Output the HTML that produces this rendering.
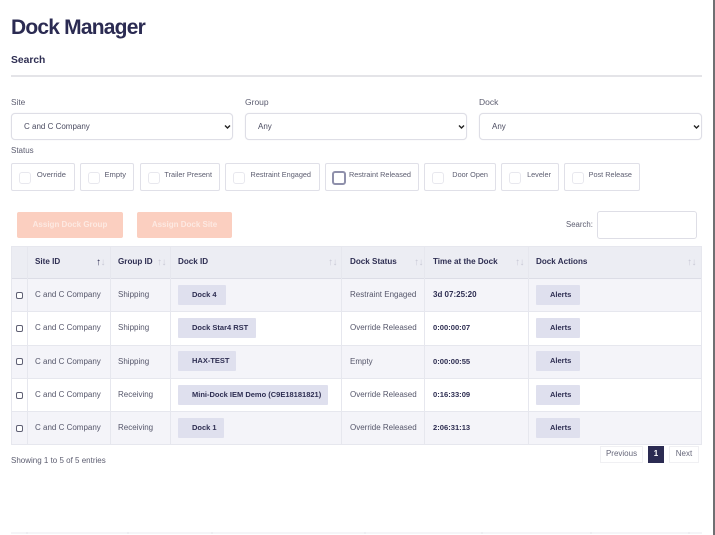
<!DOCTYPE html>
<html><head><meta charset="utf-8">
<style>
html,body{margin:0;padding:0;background:#fff}
#p{position:relative;width:715px;height:535px;overflow:hidden;background:#fff;font-family:"Liberation Sans",sans-serif;color:#55566a;font-size:8px;filter:blur(.35px)}
#p div{position:absolute;box-sizing:border-box;white-space:nowrap}
.lab{font-size:8.3px;color:#5c5d70;line-height:10px}
.sel{top:113px;height:27px;border:1px solid #dedee6;border-radius:4px;background:#fff;padding-left:12px;line-height:25px;color:#4a4b60;font-size:8px;box-shadow:0 0 1px #e4e4ea}
.sel svg{position:absolute;right:1px;top:10px}
.chk{top:163px;height:28px;border:1px solid #e0e0e8;border-radius:2px;background:#fff;color:#5c5d70;font-size:7.3px;line-height:21px;text-align:right}
.box{left:7px;top:8px;width:12px;height:12px;border:1px solid #e8e8ee;border-radius:3px;background:#fff}
.btn{top:212px;height:26px;background:#fbcfc0;border-radius:2px;color:#fde9e2;font-weight:bold;font-size:8px;line-height:25px;text-align:center}
.hc{top:246px;height:33px;background:#ecedf3}
.row{left:11px;width:690px}
.vl{width:1px;top:246px;height:199px;background:#e6e7ee}
.hl{left:11px;width:690px;height:1px;background:#e6e7ee}
.t{font-size:8px;line-height:11px;color:#55566a}
.tb{font-size:7.6px;line-height:11px;font-weight:bold;color:#2e2e52}
.th{font-size:8.1px;line-height:11px;font-weight:bold;color:#2e2e52;top:256px}
.chip{height:20px;background:#dfe0ee;border-radius:1px;color:#2e2e52;font-weight:bold;font-size:7.5px;line-height:19px;padding-left:14px}
.cb{left:16px;width:7px;height:7px;border:1px solid #5f6074;border-radius:2px;background:#fff}
.ar{font-size:10px;line-height:10px;color:#c9cad6;letter-spacing:-.5px;font-family:"Liberation Sans",sans-serif}
.pg{top:446px;height:17px;border:1px solid #f0f0f3;color:#66677a;font-size:8px;line-height:13px;text-align:center;background:#fff}
</style></head><body><div id="p">

<div style="left:11px;top:14px;font-size:21px;line-height:27px;font-weight:bold;color:#2b2b52;letter-spacing:-.8px">Dock Manager</div>
<div style="left:11px;top:54px;font-size:10.3px;line-height:14px;font-weight:bold;color:#2e2e52">Search</div>
<div style="left:11px;top:75px;width:691px;height:2px;background:#e4e4e8"></div>

<div class="lab" style="left:11px;top:97px">Site</div>
<div class="lab" style="left:245px;top:97px;font-size:8.5px">Group</div>
<div class="lab" style="left:479px;top:97px;font-size:8.5px">Dock</div>
<div class="sel" style="left:11px;width:222px">C and C Company<svg width="7" height="6" viewBox="0 0 7 6"><path d="M1 1.5 3.5 4 6 1.5" fill="none" stroke="#222" stroke-width="1.4"/></svg></div>
<div class="sel" style="left:245px;width:222px">Any<svg width="7" height="6" viewBox="0 0 7 6"><path d="M1 1.5 3.5 4 6 1.5" fill="none" stroke="#222" stroke-width="1.4"/></svg></div>
<div class="sel" style="left:479px;width:223px">Any<svg width="7" height="6" viewBox="0 0 7 6"><path d="M1 1.5 3.5 4 6 1.5" fill="none" stroke="#222" stroke-width="1.4"/></svg></div>
<div class="lab" style="left:11px;top:146px;font-size:8px">Status</div>

<div class="chk" style="left:11px;width:64px;padding-right:8px;font-size:7.6px"><div class="box"></div>Override</div>
<div class="chk" style="left:80px;width:54px;padding-right:7px;font-size:7.6px"><div class="box"></div>Empty</div>
<div class="chk" style="left:140px;width:80px;padding-right:7px"><div class="box"></div>Trailer Present</div>
<div class="chk" style="left:225px;width:95px;padding-right:8px"><div class="box"></div>Restraint Engaged</div>
<div class="chk" style="left:325px;width:94px;padding-right:7px"><div class="box" style="left:6px;top:7px;width:14px;height:14px;border:2px solid #8f90ab;border-radius:3px"></div>Restraint Released</div>
<div class="chk" style="left:424px;width:72px;padding-right:7px"><div class="box"></div>Door Open</div>
<div class="chk" style="left:501px;width:58px;padding-right:7px"><div class="box"></div>Leveler</div>
<div class="chk" style="left:564px;width:76px;padding-right:7px"><div class="box"></div>Post Release</div>

<div class="btn" style="left:17px;width:106px">Assign Dock Group</div>
<div class="btn" style="left:137px;width:95px">Assign Dock Site</div>
<div class="lab" style="left:566px;top:220px;font-size:7.8px">Search:</div>
<div style="left:597px;top:211px;width:100px;height:28px;border:1px solid #dedee6;border-radius:3px;background:#fff"></div>

<!-- table -->
<div class="hc" style="left:11px;width:690px"></div>
<div class="row" style="top:279px;height:33px;background:#f4f4f9"></div>
<div class="row" style="top:345px;height:33px;background:#f4f4f9"></div>
<div class="row" style="top:412px;height:33px;background:#f4f4f9"></div>
<div class="hl" style="top:246px"></div>
<div class="hl" style="top:278px;background:#dcdde6"></div>
<div class="hl" style="top:311px"></div>
<div class="hl" style="top:345px"></div>
<div class="hl" style="top:378px"></div>
<div class="hl" style="top:411px"></div>
<div class="hl" style="top:444px"></div>
<div class="vl" style="left:11px"></div>
<div class="vl" style="left:27px"></div>
<div class="vl" style="left:110px"></div>
<div class="vl" style="left:170px"></div>
<div class="vl" style="left:341px"></div>
<div class="vl" style="left:424px"></div>
<div class="vl" style="left:528px"></div>
<div class="vl" style="left:701px"></div>

<div class="th" style="left:35px">Site ID</div>
<div class="th" style="left:118px">Group ID</div>
<div class="th" style="left:178px">Dock ID</div>
<div class="th" style="left:350px">Dock Status</div>
<div class="th" style="left:433px">Time at the Dock</div>
<div class="th" style="left:536px">Dock Actions</div>
<div class="ar" style="left:96px;top:258px"><span style="color:#2e2e52">↑</span>↓</div>
<div class="ar" style="left:157px;top:258px">↑↓</div>
<div class="ar" style="left:328px;top:258px">↑↓</div>
<div class="ar" style="left:414px;top:258px">↑↓</div>
<div class="ar" style="left:515px;top:258px">↑↓</div>
<div class="ar" style="left:687px;top:258px">↑↓</div>

<!-- rows -->
<div class="cb" style="top:292px"></div><div class="t" style="left:35px;top:289px">C and C Company</div><div class="t" style="left:118px;top:289px">Shipping</div><div class="chip" style="left:178px;top:285px;width:48px">Dock 4</div><div class="t" style="left:350px;top:289px">Restraint Engaged</div><div class="tb" style="left:433px;top:289px;font-size:8px">3d 07:25:20</div><div class="chip" style="left:536px;top:285px;width:44px">Alerts</div>

<div class="cb" style="top:325px"></div><div class="t" style="left:35px;top:322px">C and C Company</div><div class="t" style="left:118px;top:322px">Shipping</div><div class="chip" style="left:178px;top:318px;width:78px">Dock Star4 RST</div><div class="t" style="left:350px;top:322px">Override Released</div><div class="tb" style="left:433px;top:322px">0:00:00:07</div><div class="chip" style="left:536px;top:318px;width:44px">Alerts</div>

<div class="cb" style="top:358px"></div><div class="t" style="left:35px;top:356px">C and C Company</div><div class="t" style="left:118px;top:356px">Shipping</div><div class="chip" style="left:178px;top:351px;width:58px">HAX-TEST</div><div class="t" style="left:350px;top:356px">Empty</div><div class="tb" style="left:433px;top:356px">0:00:00:55</div><div class="chip" style="left:536px;top:351px;width:44px">Alerts</div>

<div class="cb" style="top:392px"></div><div class="t" style="left:35px;top:389px">C and C Company</div><div class="t" style="left:118px;top:389px">Receiving</div><div class="chip" style="left:178px;top:385px;width:150px">Mini-Dock IEM Demo (C9E18181821)</div><div class="t" style="left:350px;top:389px">Override Released</div><div class="tb" style="left:433px;top:389px">0:16:33:09</div><div class="chip" style="left:536px;top:385px;width:44px">Alerts</div>

<div class="cb" style="top:425px"></div><div class="t" style="left:35px;top:422px">C and C Company</div><div class="t" style="left:118px;top:422px">Receiving</div><div class="chip" style="left:178px;top:418px;width:46px">Dock 1</div><div class="t" style="left:350px;top:422px">Override Released</div><div class="tb" style="left:433px;top:422px">2:06:31:13</div><div class="chip" style="left:536px;top:418px;width:44px">Alerts</div>

<div class="lab" style="left:11px;top:456px;font-size:8px">Showing 1 to 5 of 5 entries</div>
<div class="pg" style="left:600px;width:43px">Previous</div>
<div class="pg" style="left:648px;top:446px;width:16px;background:#2b2b52;border-color:#2b2b52;color:#fff;font-weight:bold">1</div>
<div class="pg" style="left:669px;width:30px">Next</div>

<!-- bottom faint row -->
<div style="left:11px;top:532px;width:691px;height:2px;background:#f5f5f8"></div>
<div style="left:26px;top:532px;width:2px;height:2px;background:#eeeef2"></div>
<div style="left:127px;top:532px;width:2px;height:2px;background:#eeeef2"></div>
<div style="left:211px;top:532px;width:2px;height:2px;background:#eeeef2"></div>
<div style="left:364px;top:532px;width:2px;height:2px;background:#eeeef2"></div>
<div style="left:481px;top:532px;width:2px;height:2px;background:#eeeef2"></div>
<div style="left:590px;top:532px;width:2px;height:2px;background:#eeeef2"></div>
<div style="left:688px;top:532px;width:2px;height:2px;background:#eeeef2"></div>

<!-- right edge -->
<div style="left:713px;top:0;width:2px;height:535px;background:#6f6f72"></div>
</div></body></html>
